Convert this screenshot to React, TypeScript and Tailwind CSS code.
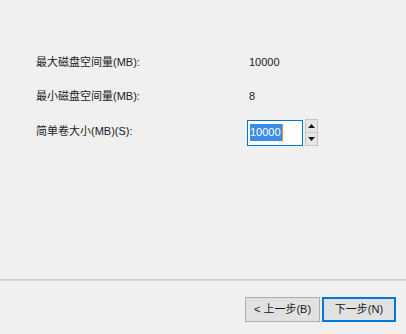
import { useState } from 'react'

const font = { fontFamily: '"Liberation Sans", "Noto Sans CJK SC", sans-serif' }

function Spinner() {
  return (
    <div className="ml-[2px] flex h-[27px] w-[13px] flex-col border border-[#c6c6c6] bg-[#f0f0f0]">
      <button className="flex flex-1 items-center justify-center border-b border-[#c6c6c6] bg-[#e6e6e6]">
        <svg width="7" height="4" viewBox="0 0 7 4">
          <path d="M0 4 L3.5 0 L7 4 Z" fill="#1a1a1a" />
        </svg>
      </button>
      <button className="flex flex-1 items-center justify-center bg-[#e6e6e6]">
        <svg width="7" height="4" viewBox="0 0 7 4">
          <path d="M0 0 L7 0 L3.5 4 Z" fill="#1a1a1a" />
        </svg>
      </button>
    </div>
  )
}

export default function App() {
  const [size] = useState('10000')

  return (
    <div
      className="flex h-[334px] w-[406px] flex-col overflow-hidden bg-[#f0f0f0] text-[11px] text-[#1a1a1a]"
      style={font}
    >
      {/* Fields */}
      <div className="flex h-[279px] flex-col pl-[36px] pt-[52px]">
        <div className="flex h-5 items-center">
          <span className="w-[213px]">最大磁盘空间量(MB):</span>
          <span>10000</span>
        </div>
        <div className="mt-[14px] flex h-5 items-center">
          <span className="w-[213px]">最小磁盘空间量(MB):</span>
          <span>8</span>
        </div>
        <div className="mt-[13px] flex items-center">
          <span className="-mt-[3px] w-[211px]">简单卷大小(MB)(S):</span>
          <div className="flex h-[26px] w-[56px] items-center border border-[#0078d7] bg-white pl-[2px]">
            <span className="flex h-[17px] items-center bg-[#3a8ee6] pr-[1px] text-white">{size}</span>
            <span className="h-[17px] w-px bg-[#e08a3a]" />
          </div>
          <Spinner />
        </div>
      </div>

      {/* Separator */}
      <div className="h-px bg-[#cfcfcf]" />
      <div className="h-px bg-[#dadada]" />

      {/* Buttons */}
      <div className="flex justify-end gap-[2px] pr-[10px] pt-[16px]">
        <button className="h-[25px] w-[75px] border border-[#adadad] bg-[#e1e1e1] text-[11px] text-[#1a1a1a]">
          &lt; 上一步(B)
        </button>
        <button className="h-[25px] w-[74px] border-2 border-[#0078d7] bg-[#e1e1e1] text-[11px] text-[#1a1a1a]">
          下一步(N)
        </button>
      </div>
    </div>
  )
}
